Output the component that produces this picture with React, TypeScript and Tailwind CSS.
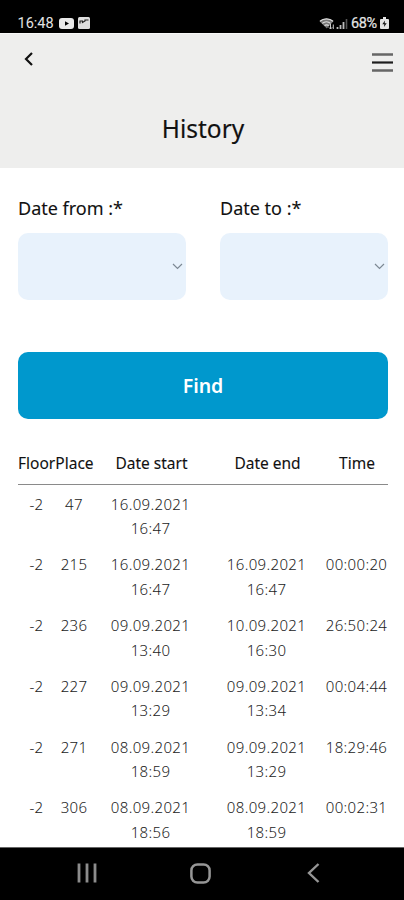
import React from 'react';

interface HistoryEntry {
    floor: string;
    place: string;
    start: [string, string];
    end?: [string, string];
    time?: string;
}

const entries: HistoryEntry[] = [
    { floor: '-2', place: '47', start: ['16.09.2021', '16:47'] },
    { floor: '-2', place: '215', start: ['16.09.2021', '16:47'], end: ['16.09.2021', '16:47'], time: '00:00:20' },
    { floor: '-2', place: '236', start: ['09.09.2021', '13:40'], end: ['10.09.2021', '16:30'], time: '26:50:24' },
    { floor: '-2', place: '227', start: ['09.09.2021', '13:29'], end: ['09.09.2021', '13:34'], time: '00:04:44' },
    { floor: '-2', place: '271', start: ['08.09.2021', '18:59'], end: ['09.09.2021', '13:29'], time: '18:29:46' },
    { floor: '-2', place: '306', start: ['08.09.2021', '18:56'], end: ['08.09.2021', '18:59'], time: '00:02:31' },
];

const StatusBar: React.FC = () => (
    <div className="flex h-[33px] shrink-0 items-end justify-between bg-black pr-[15px] pb-px pl-[17.5px] font-['Roboto',sans-serif] text-[14.5px] leading-[16px] text-[#e4e4e4]">
        <div className="flex items-center">
            <span className="w-[37px]">16:48</span>
            <svg className="mb-[2px] ml-[4px]" width="15" height="11" viewBox="0 0 15 11">
                <rect width="15" height="11" rx="3" fill="#e8e8e8" />
                <path d="M6 3.2v4.6l4-2.3z" fill="#000" />
            </svg>
            <svg className="mb-[2px] ml-[4px]" width="12" height="12" viewBox="0 0 12 12">
                <rect width="12" height="12" rx="1.5" fill="#dedede" />
                <path d="M2 6.5V4h2.5v1.5L7 4V3h3.5" fill="none" stroke="#222" strokeWidth="1.2" />
            </svg>
        </div>
        <div className="flex items-center">
            <svg className="mb-px" width="30" height="13" viewBox="0 0 30 13">
                <path d="M0.5 4.2C4 .5 11 .5 14.5 4.2L7.8 11.5z" fill="#777" />
                <path d="M1 4.2C4.5 1 10.5 1 14 4.2M3.2 6.4c2.5-2.2 6-2.2 8.4 0M5.5 8.6c1.3-1 3-1 4.3 0" fill="none" stroke="#ddd" strokeWidth="1.2" />
                <path d="M11.5 7v5M9.8 10.3l1.7 1.7 1.7-1.7M14.3 12V7.5" fill="none" stroke="#ccc" strokeWidth="1" />
                <path d="M18.5 12v-2M21.5 12V8M24.5 12V5" stroke="#bbb" strokeWidth="1.8" />
                <path d="M27.5 12V2" stroke="#555" strokeWidth="1.6" />
            </svg>
            <span className="ml-[2px] w-[28px] tracking-[-0.4px] [-webkit-text-stroke:0.2px_#e4e4e4]">68%</span>
            <svg className="mb-[2px] ml-px" width="9" height="12" viewBox="0 0 9 12">
                <path d="M3 0h3v2h2a1 1 0 011 1v8a1 1 0 01-1 1H1a1 1 0 01-1-1V3a1 1 0 011-1h2z" fill="#e4e4e4" />
                <path d="M5 3.5L2.3 7.3H4.3L4 10l2.7-3.8H4.7z" fill="#111" />
            </svg>
        </div>
    </div>
);

const Header: React.FC = () => (
    <header className="h-[135px] shrink-0 border-t border-[#f8f8f7] bg-[#eeeeed]">
        <div className="flex items-start justify-between pt-[17px] pr-[11px] pl-[23px]">
            <button aria-label="Back">
                <svg width="12" height="16" viewBox="0 0 12 16">
                    <path d="M9 2L3 8l6 6" fill="none" stroke="#111" strokeWidth="2.2" />
                </svg>
            </button>
            <button aria-label="Menu" className="pt-[2px]">
                <svg width="21" height="19" viewBox="0 0 21 19">
                    <path d="M0 1.5h21M0 17.5h21" stroke="#666" strokeWidth="2.4" />
                    <path d="M0 9.5h21" stroke="#1d1d1d" strokeWidth="2.2" />
                </svg>
            </button>
        </div>
        <h1 className="mt-[39px] pl-[2px] text-center text-[24.5px] leading-[36px] text-[#111] [-webkit-text-stroke:0.15px_#111]">History</h1>
    </header>
);

const DateField: React.FC<{ label: string }> = ({ label }) => (
    <div className="w-[168px]">
        <label className="block text-[18px] leading-[26px] text-[#111] [-webkit-text-stroke:0.1px_#111]">{label}</label>
        <div className="mt-[12px] flex h-[67px] items-center justify-end rounded-[10px] bg-[#e8f2fc] pr-[3px]">
            <svg width="11" height="7" viewBox="0 0 11 7">
                <path d="M1 1l4.5 4.5L10 1" fill="none" stroke="#7d8994" strokeWidth="1.2" />
            </svg>
        </div>
    </div>
);

const HistoryTable: React.FC = () => (
    <div>
        <div className="grid h-[46px] grid-cols-[37px_39px_115px_117px_62px] border-b border-[#8a8a8a] text-center text-[15.5px] leading-[49px] whitespace-nowrap text-[#111] [-webkit-text-stroke:0.1px_#111]">
            <span>Floor</span>
            <span>Place</span>
            <span>Date start</span>
            <span>Date end</span>
            <span>Time</span>
        </div>
        <div className="pt-[6.5px] text-center text-[15px] leading-[24.6px] font-light tracking-[0.35px] text-[#222]">
            {entries.map((entry) => (
                <div key={entry.place} className="grid h-[60.8px] grid-cols-[37px_38px_115px_117px_63px]">
                    <span>{entry.floor}</span>
                    <span>{entry.place}</span>
                    <span>
                        {entry.start[0]}
                        <br />
                        {entry.start[1]}
                    </span>
                    <span>
                        {entry.end && (
                            <>
                                {entry.end[0]}
                                <br />
                                {entry.end[1]}
                            </>
                        )}
                    </span>
                    <span>{entry.time}</span>
                </div>
            ))}
        </div>
    </div>
);

const NavBar: React.FC = () => (
    <nav className="flex h-[53px] shrink-0 items-center border-t border-[#666] bg-black pb-[2px] pl-[77px]">
        <svg width="20" height="20" viewBox="0 0 20 20">
            <path d="M2 .5v19M10 .5v19M18 .5v19" stroke="#8c8c8c" strokeWidth="2.8" />
        </svg>
        <svg className="ml-[93px]" width="21" height="21" viewBox="0 0 21 21">
            <rect x="1.4" y="1.4" width="18.2" height="18.2" rx="6" fill="none" stroke="#969696" strokeWidth="2.5" />
        </svg>
        <svg className="ml-[96px]" width="13" height="20" viewBox="0 0 13 20">
            <path d="M11.5 1L2 10l9.5 9" fill="none" stroke="#969696" strokeWidth="2.4" />
        </svg>
    </nav>
);

export default function App() {
    return (
        <div className="flex h-[900px] w-[404px] flex-col overflow-hidden bg-white font-['Noto_Sans','Open_Sans',sans-serif]">
            <StatusBar />
            <Header />
            <main className="min-h-0 flex-1 overflow-hidden pr-[16px] pl-[18px]">
                <div className="flex justify-between pt-[27px]">
                    <DateField label="Date from :*" />
                    <DateField label="Date to :*" />
                </div>
                <button className="mt-[52px] mb-[20px] block h-[67px] w-full rounded-[10px] bg-[#0098cd] text-[19.5px] font-semibold text-white">
                    Find
                </button>
                <HistoryTable />
            </main>
            <NavBar />
        </div>
    );
}
